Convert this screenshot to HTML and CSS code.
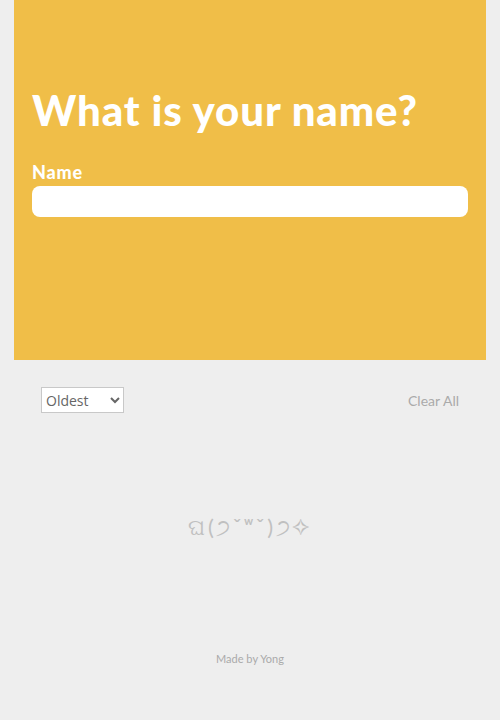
FILE: index.html
```html
<!DOCTYPE html>
<html>
<head>
<meta charset="utf-8">
<link rel="stylesheet" href="styles.css">
</head>
<body>
<div class="app">
  <header class="hero">
    <h1 class="title">What is your name?</h1>
    <label class="label" for="name">Name</label>
    <input class="name-input" id="name" type="text">
  </header>
  <div class="toolbar">
    <select class="sort">
      <option>Oldest</option>
      <option>Newest</option>
    </select>
    <button class="clear">Clear All</button>
  </div>
  <div class="empty">ଘ(੭ˇʷˇ)੭✧</div>
  <footer class="footer">Made by Yong</footer>
</div>
</body>
</html>
```
FILE: styles.css
```css
html, body {
  margin: 0;
  padding: 0;
  background: #eeeeee;
}
body {
  font-family: "Lato", "Noto Sans", sans-serif;
}
.app {
  margin: 0 14px;
}
.hero {
  background: #f0be48;
  height: 360px;
  box-sizing: border-box;
  padding: 85px 18px 0 18px;
  display: flex;
  flex-direction: column;
}
.title {
  margin: 0;
  color: #fff;
  font-size: 42px;
  font-weight: 900;
  line-height: 50px;
  letter-spacing: 0.9px;
}
.label {
  color: #fff;
  font-size: 18px;
  font-weight: 900;
  margin-top: 27px;
  line-height: 20px;
  letter-spacing: 0.8px;
}
.name-input {
  margin-top: 4px;
  height: 31px;
  border: none;
  border-radius: 8px;
  background: #fff;
  box-sizing: border-box;
  outline: none;
}
.toolbar {
  display: flex;
  justify-content: space-between;
  align-items: center;
  padding: 27px 14px 0 27px;
}
.sort {
  width: 83px;
  height: 26px;
  font-family: "Open Sans", sans-serif;
  font-size: 14px;
  color: #666;
  background: #fff;
  border: 1px solid #c8c8c8;
  border-radius: 0;
}
.clear {
  background: none;
  border: none;
  color: #aaaaaa;
  font-family: "Lato", sans-serif;
  font-size: 14px;
  padding: 4px 13px;
  margin-top: 1px;
}
.empty {
  text-align: center;
  color: #c0c0c0;
  font-size: 22px;
  letter-spacing: 2.5px;
  margin-top: 99px;
  height: 30px;
  line-height: 30px;
}
.footer {
  text-align: center;
  color: #aaaaaa;
  font-size: 11px;
  margin-top: 110px;
}
```
